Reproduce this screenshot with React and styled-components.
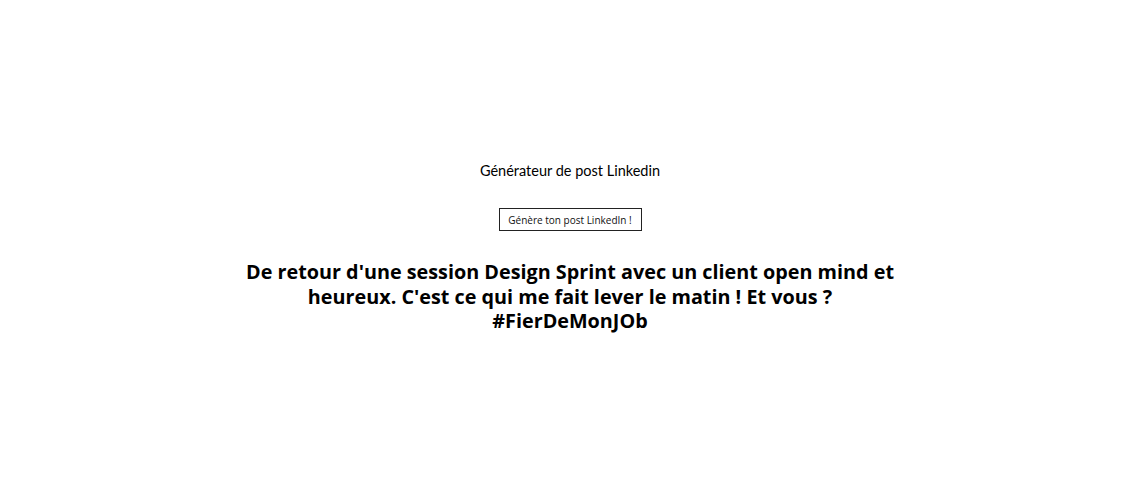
import styled, { createGlobalStyle } from "styled-components";

const GlobalStyle = createGlobalStyle`
  body {
    margin: 0;
    background: #ffffff;
    color: #000000;
  }
`;

const Page = styled.main`
  display: flex;
  flex-direction: column;
  align-items: center;
  padding-top: 161px;
  box-sizing: border-box;
  width: 100%;
  min-height: 480px;
`;

const Title = styled.h1`
  margin: 0;
  font-family: "Lato", "Noto Sans", sans-serif;
  font-weight: 400;
  font-size: 14.5px;
  line-height: 20px;
`;

const GenerateButton = styled.button`
  margin-top: 27px;
  width: 143px;
  height: 23px;
  padding: 0;
  background: #ffffff;
  border: 1px solid #222222;
  font-family: "Open Sans", "Noto Sans", sans-serif;
  font-size: 10px;
  color: #111111;
  cursor: pointer;
`;

const Post = styled.p`
  margin: 29px 0 0;
  max-width: 680px;
  text-align: center;
  font-family: "Open Sans", "Noto Sans", sans-serif;
  font-weight: 700;
  font-size: 19.8px;
  line-height: 24.5px;
`;

const App = () => (
  <>
    <GlobalStyle />
    <Page>
      <Title>Générateur de post Linkedin</Title>
      <GenerateButton>Génère ton post LinkedIn !</GenerateButton>
      <Post>
        De retour d'une session Design Sprint avec un client open mind et heureux. C'est ce qui me
        fait lever le matin ! Et vous ? #FierDeMonJOb
      </Post>
    </Page>
  </>
);

export default App;
